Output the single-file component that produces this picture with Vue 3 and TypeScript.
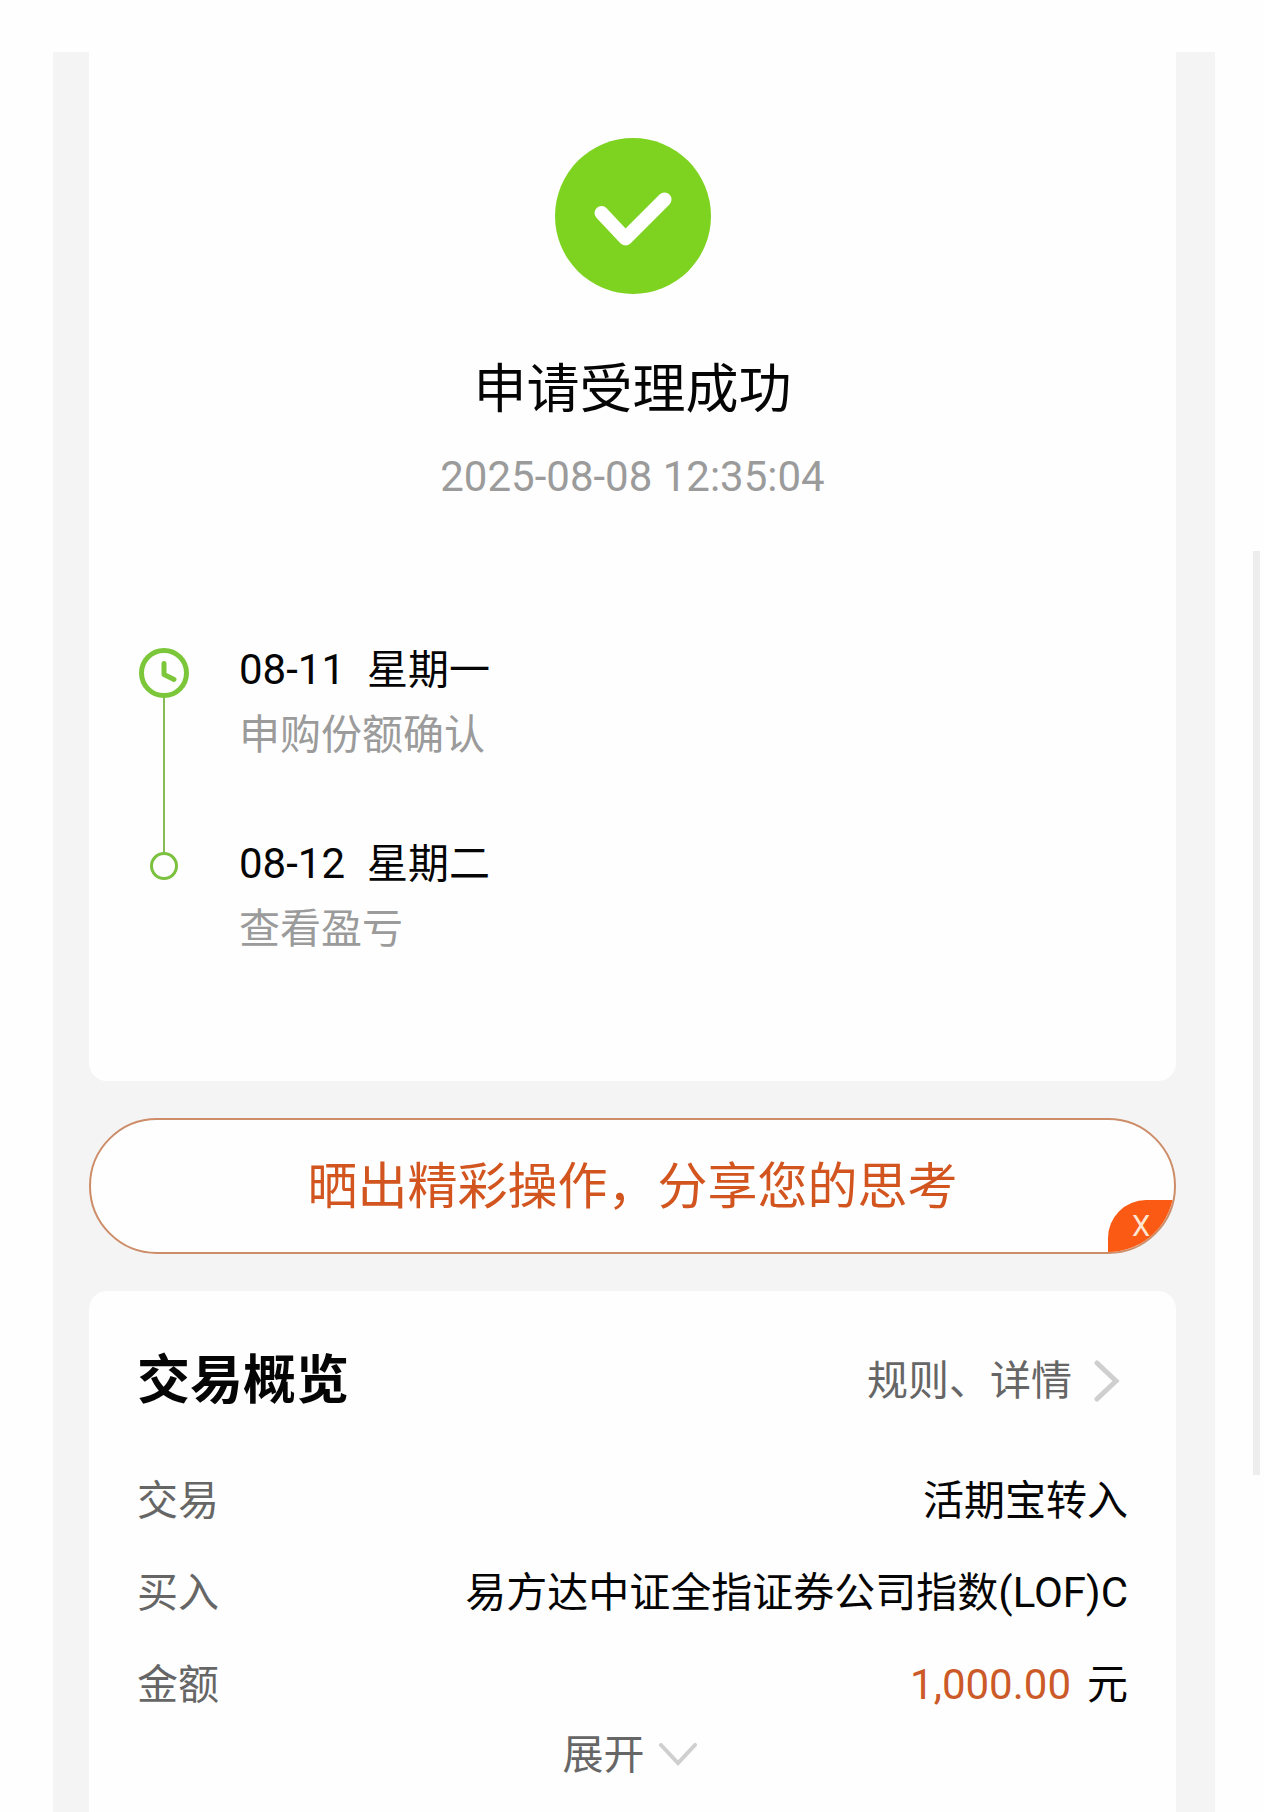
<script setup lang="ts">
interface Step {
  date: string
  weekday: string
  note: string
}

interface Row {
  label: string
  value: string
  code?: string
  amount?: string
}

const steps: Step[] = [
  { date: '08-11', weekday: '星期一', note: '申购份额确认' },
  { date: '08-12', weekday: '星期二', note: '查看盈亏' },
]

const rows: Row[] = [
  { label: '交易', value: '活期宝转入' },
  { label: '买入', value: '易方达中证全指证券公司指数', code: '(LOF)C' },
  { label: '金额', value: '元', amount: '1,000.00' },
]
</script>

<template>
  <div class="page">
    <main class="panel">
      <section class="card result">
        <svg class="success" viewBox="0 0 156 156" aria-hidden="true">
          <circle cx="78" cy="78" r="78" fill="#7ed321" />
          <path d="M46.500 75 L70.500 100.500 L109.500 61.500" fill="none" stroke="#fff" stroke-width="14" stroke-linecap="round" stroke-linejoin="round" />
        </svg>
        <h1 class="title">申请受理成功</h1>
        <time class="stamp">2025-08-08 12:35:04</time>

        <ol class="timeline">
          <li v-for="(step, i) in steps" :key="step.date" class="step">
            <div class="marker">
              <template v-if="i === 0">
                <svg class="clock" viewBox="0 0 50 50" aria-hidden="true">
                  <circle cx="25" cy="25" r="22.500" fill="none" stroke="#7cc63a" stroke-width="5" />
                  <path d="M25 15.500 V26.500 L35 31.500" fill="none" stroke="#7cc63a" stroke-width="5" stroke-linecap="round" stroke-linejoin="round" />
                </svg>
                <span class="line grow"></span>
              </template>
              <template v-else>
                <span class="line lead"></span>
                <span class="dot"></span>
              </template>
            </div>
            <div class="info">
              <p class="when"><span class="date">{{ step.date }}</span><span class="weekday">{{ step.weekday }}</span></p>
              <p class="note">{{ step.note }}</p>
            </div>
          </li>
        </ol>
      </section>

      <div class="share">
        <button type="button" class="share-main">晒出精彩操作，分享您的思考</button>
        <button type="button" class="share-close" aria-label="关闭">X</button>
      </div>

      <section class="card overview">
        <header class="head">
          <h2 class="heading">交易概览</h2>
          <a class="more" href="#">规则、详情
            <svg class="chev-right" viewBox="0 0 26 42" aria-hidden="true">
              <path d="M3 3 L22 21 L3 39" fill="none" stroke="#cfcfcf" stroke-width="5" stroke-linecap="round" />
            </svg>
          </a>
        </header>
        <dl class="rows">
          <div v-for="row in rows" :key="row.label" class="row">
            <dt>{{ row.label }}</dt>
            <dd><span v-if="row.amount" class="amount">{{ row.amount }}</span>{{ row.value }}<span v-if="row.code" class="code">{{ row.code }}</span></dd>
          </div>
        </dl>
        <button type="button" class="expand">展开
          <svg class="chev-down" viewBox="0 0 38 24" aria-hidden="true">
            <path d="M2 2 L19 20 L36 2" fill="none" stroke="#cfcfcf" stroke-width="4" stroke-linecap="round" />
          </svg>
        </button>
      </section>
    </main>
    <div class="scrollbar"></div>
  </div>
</template>

<style>
body {
  margin: 0;
  background: #fefefe;
}
</style>

<style scoped>
.page {
  box-sizing: border-box;
  display: flex;
  flex-direction: column;
  min-height: 100vh;
  padding: 52px 49px 0 53px;
  font-family: Roboto, "Noto Sans CJK SC", sans-serif;
  font-size: 41px;
  line-height: 56px;
  color: #050505;
}
h1, h2, p, ol, dl, dd {
  margin: 0;
  padding: 0;
}
button {
  margin: 0;
  padding: 0;
  border: 0;
  background: none;
  font: inherit;
  cursor: pointer;
}
.panel {
  flex: 1;
  display: flex;
  flex-direction: column;
  gap: 37px;
  padding: 0 39px 0 36px;
  background: #f4f4f4;
}
.card {
  background: #fefefe;
}
.result {
  display: flex;
  flex-direction: column;
  align-items: center;
  padding: 86px 50px 124px;
  border-radius: 0 0 18px 18px;
}
.success {
  width: 156px;
  height: 156px;
}
.title {
  margin-top: 64px;
  font-size: 53px;
  line-height: 64px;
  font-weight: 400;
}
.stamp {
  margin-top: 31px;
  font-size: 42px;
  line-height: 48px;
  color: #9b9b9b;
}
.timeline {
  align-self: stretch;
  margin-top: 141px;
  list-style: none;
}
.step {
  display: flex;
  gap: 50px;
}
.marker {
  display: flex;
  flex-direction: column;
  align-items: center;
  width: 50px;
}
.clock {
  flex: none;
  width: 50px;
  height: 50px;
  margin-top: 6px;
}
.line {
  width: 2px;
  background: #86bb55;
}
.grow {
  flex: 1;
}
.lead {
  height: 16px;
}
.dot {
  box-sizing: border-box;
  width: 28px;
  height: 28px;
  border: 3px solid #7cc040;
  border-radius: 50%;
}
.info {
  display: flex;
  flex-direction: column;
  gap: 9px;
}
.step:not(:last-child) .info {
  padding-bottom: 73px;
}
.when {
  display: flex;
}
.date {
  width: 128px;
  font-size: 42px;
}
.note {
  color: #9b9b9b;
}
.share {
  position: relative;
  display: flex;
  overflow: hidden;
  border: 2px solid #cc8d68;
  border-radius: 68px;
  background: #fefefe;
}
.share-main {
  flex: 1;
  height: 132px;
  padding-top: 2px;
  font-size: 50px;
  color: #d2551f;
}
.share-close {
  position: absolute;
  right: 0;
  bottom: 0;
  width: 66px;
  height: 52px;
  border-radius: 38px 0 0 0;
  background: #fa5a14;
  font-size: 29px;
  line-height: 52px;
  color: #ffe6d2;
}
.overview {
  flex: 1;
  display: flex;
  flex-direction: column;
  padding: 58px 48px 29px;
  border-radius: 18px 18px 0 0;
}
.head {
  display: flex;
  align-items: center;
  justify-content: space-between;
}
.heading {
  font-size: 53px;
  line-height: 64px;
  font-weight: 700;
}
.more {
  display: flex;
  align-items: center;
  gap: 22px;
  padding-right: 8px;
  color: #666;
  text-decoration: none;
}
.chev-right {
  width: 26px;
  height: 42px;
}
.rows {
  display: flex;
  flex-direction: column;
  gap: 36px;
  margin-top: 60px;
}
.row {
  display: flex;
  justify-content: space-between;
}
.row dt {
  color: #666;
}
.code {
  font-size: 42px;
}
.amount {
  margin-right: 16px;
  font-size: 42px;
  color: #cc5a28;
}
.expand {
  display: flex;
  align-items: center;
  align-self: center;
  gap: 14px;
  margin-top: 14px;
  padding-right: 6px;
  color: #666;
}
.chev-down {
  width: 38px;
  height: 24px;
}
.scrollbar {
  position: fixed;
  top: 551px;
  right: 4px;
  width: 7px;
  height: 51vh;
  background: #ededed;
}
</style>
